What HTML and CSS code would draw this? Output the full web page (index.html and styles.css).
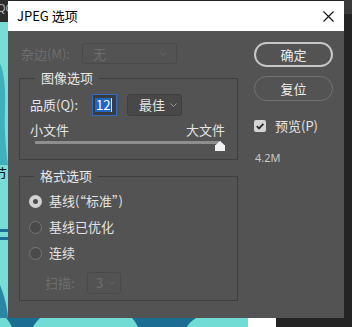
FILE: index.html
```html
<!DOCTYPE html>
<html lang="zh-CN">
<head>
<meta charset="utf-8">
<title>JPEG 选项</title>
<link rel="stylesheet" href="styles.css">
</head>
<body>
<svg class="backdrop" width="352" height="327" viewBox="0 0 352 327" aria-hidden="true">
  <rect width="352" height="327" fill="#242424"/>
  <rect x="0" y="0" width="8" height="22" fill="#2d2d2d"/>
  <text x="-3" y="12" fill="#b8b8b8" font-size="11" font-family="Noto Sans">QC</text>
  <rect x="0" y="22" width="8" height="305" fill="#78ddd6"/>
  <path d="M0 64 C4 70 6 90 5 110 C4 130 6 150 8 165 L0 165 Z" fill="#3fb0bc"/>
  <text x="-7" y="179" fill="#141414" font-size="14" font-family="Noto Sans CJK SC">节</text>
  <rect x="0" y="229" width="8" height="3" fill="#1e6f96"/>
  <rect x="0" y="237" width="8" height="3" fill="#1e6f96"/>
  <path d="M0 285 C4 295 7 305 8 318 L0 318 Z" fill="#2b86a6"/>
  <rect x="0" y="318" width="248" height="9" fill="#70dcd4"/>
  <path d="M6 318 L40 318 C36 322 34 325 33 327 L12 327 C10 323 8 320 6 318 Z" fill="#1b6d93"/>
  <path d="M132 318 L196 318 C190 322 188 325 187 327 L138 327 C136 323 134 320 132 318 Z" fill="#1b6d93"/>
  <rect x="248" y="318" width="28" height="9" fill="#ffffff"/>
  <rect x="344" y="0" width="8" height="14" fill="#3a3a3a"/>
</svg>

<div class="dialog">
  <div class="titlebar">
    <span class="title">JPEG 选项</span>
    <svg class="close" width="11" height="11" viewBox="0 0 11 11" aria-hidden="true">
      <path d="M0.5 0.5 L10.5 10.5 M10.5 0.5 L0.5 10.5" stroke="#111" stroke-width="1.1" fill="none"/>
    </svg>
  </div>

  <div class="content">
    <div class="main">
      <div class="row matte">
        <span class="label disabled">杂边(M):</span>
        <div class="select disabled wide">
          <span>无</span>
          <svg class="chev" width="7" height="4" viewBox="0 0 7 4"><path d="M0.5 0.5 L3.5 3.5 L6.5 0.5" fill="none" stroke="currentColor" stroke-width="1"/></svg>
        </div>
      </div>

      <fieldset class="group image">
        <legend>图像选项</legend>
        <div class="row quality">
          <span class="label">品质(Q):</span>
          <div class="num"><span class="sel">12</span><span class="caret"></span></div>
          <div class="select best">
            <span>最佳</span>
            <svg class="chev" width="7" height="4" viewBox="0 0 7 4"><path d="M0.5 0.5 L3.5 3.5 L6.5 0.5" fill="none" stroke="currentColor" stroke-width="1"/></svg>
          </div>
        </div>
        <div class="sizes"><span>小文件</span><span>大文件</span></div>
        <div class="slider">
          <div class="track"></div>
          <svg class="thumb" width="10" height="10" viewBox="0 0 10 10" aria-hidden="true">
            <path d="M5 0 L10 4.5 L10 10 L0 10 L0 4.5 Z" fill="#f2f2f2"/>
          </svg>
        </div>
      </fieldset>

      <fieldset class="group format">
        <legend>格式选项</legend>
        <div class="radio on"><span class="dot"></span><span>基线(“标准”)</span></div>
        <div class="radio"><span class="dot"></span><span>基线已优化</span></div>
        <div class="radio"><span class="dot"></span><span>连续</span></div>
        <div class="row scans">
          <span class="label disabled">扫描:</span>
          <div class="select disabled small">
            <span>3</span>
            <svg class="chev" width="7" height="4" viewBox="0 0 7 4"><path d="M0.5 0.5 L3.5 3.5 L6.5 0.5" fill="none" stroke="currentColor" stroke-width="1"/></svg>
          </div>
        </div>
      </fieldset>
    </div>

    <div class="side">
      <div class="btn primary">确定</div>
      <div class="btn">复位</div>
      <div class="check">
        <span class="box">
          <svg width="12" height="12" viewBox="0 0 12 12" aria-hidden="true"><path d="M2.8 6.2 L5 8.4 L9.4 3.8" fill="none" stroke="#2b2b2b" stroke-width="1.8"/></svg>
        </span>
        <span>预览(P)</span>
      </div>
      <div class="filesize">4.2M</div>
    </div>
  </div>
</div>
</body>
</html>
```

FILE: styles.css
```css
* { box-sizing: border-box; }
html, body { margin: 0; padding: 0; }
body {
  width: 352px;
  height: 327px;
  overflow: hidden;
  position: relative;
  background: #242424;
  font-family: "Noto Sans CJK SC", "Noto Sans", sans-serif;
  font-size: 13px;
  color: #e4e4e4;
}
.backdrop { position: absolute; left: 0; top: 0; }

.dialog {
  position: relative;
  margin: 1px 0 0 8px;
  width: 336px;
  height: 317px;
  background: #535353;
  display: flex;
  flex-direction: column;
}
.titlebar {
  height: 30px;
  flex: none;
  background: #ffffff;
  color: #000;
  display: flex;
  align-items: center;
  justify-content: space-between;
  padding: 0 10px 0 9px;
  font-size: 13px;
}
.title { line-height: 16px; }
.close { display: block; }

.content {
  display: flex;
  gap: 16px;
  padding: 0 11px;
}
.main { width: 219px; flex: none; }
.side {
  width: 79px;
  flex: none;
  padding-top: 11px;
  display: flex;
  flex-direction: column;
}

.row { display: flex; align-items: center; }
.label { line-height: 16px; white-space: nowrap; }
.disabled { color: #6e6e6e; }

.matte { margin-top: 12px; height: 21px; padding-left: 2px; }
.matte .label { width: 61px; }

.select {
  display: flex;
  align-items: center;
  justify-content: space-between;
  border: 1px solid #3f3f3f;
  border-radius: 3px;
  background: #484848;
  color: #e4e4e4;
  line-height: 16px;
}
.select.disabled { background: #535353; border-color: #494949; color: #6e6e6e; }
.chev { display: block; color: #9a9a9a; }
.select.disabled .chev { color: #666; }
.wide { width: 95px; height: 21px; padding: 0 9px 0 10px; }
.best { width: 55px; height: 22px; margin-left: 10px; padding: 0 4px 0 11px; }
.small { width: 34px; height: 22px; padding: 0 5px 0 8px; }

.group {
  margin: 5px 0 0;
  padding: 0 12px 8px 10px;
  border: 1px solid #3e3e3e;
  min-width: 0;
}
.group legend {
  margin-left: 5px;
  padding: 0 6px;
  line-height: 18px;
  color: #e8e8e8;
}

.quality { margin-top: 7px; height: 22px; }
.quality .label { width: 62px; }
.num {
  width: 25px;
  height: 22px;
  border: 1px solid #2f6ec4;
  background: #3b3b3b;
  display: flex;
  align-items: center;
  padding-left: 2px;
}
.sel {
  background: #1f66cc;
  color: #fff;
  line-height: 14px;
  padding: 0 1px;
}
.caret { width: 1px; height: 14px; background: #e6e6e6; }

.sizes {
  margin-top: 6px;
  height: 16px;
  line-height: 16px;
  display: flex;
  justify-content: space-between;
}
.slider { position: relative; height: 10px; }
.track {
  margin: 3px 4px 0 5px;
  height: 3px;
  background: #8e8e8e;
}
.thumb { position: absolute; right: 0; top: 0; display: block; }

.format { margin-top: 7px; padding-left: 9px; padding-bottom: 6px; }
.radio {
  display: flex;
  align-items: center;
  height: 26px;
  line-height: 16px;
}
.radio:first-of-type { margin-top: 3px; }
.dot {
  width: 13px;
  height: 13px;
  border-radius: 50%;
  border: 1px solid #767676;
  background: #4a4a4a;
  margin-right: 7px;
  flex: none;
}
.radio.on .dot {
  border: 4px solid #d2d2d2;
  background: #4c4c4c;
}
.scans { margin-top: 6px; height: 22px; padding-left: 16px; }
.scans .label { width: 42px; }

.btn {
  height: 25px;
  border-radius: 13px;
  border: 1.5px solid #727272;
  display: flex;
  align-items: center;
  justify-content: center;
  line-height: 16px;
  color: #ececec;
}
.btn.primary { border: 2px solid #c6c6c6; }
.btn + .btn { margin-top: 9px; }

.check {
  margin-top: 17px;
  height: 16px;
  display: flex;
  align-items: center;
  line-height: 16px;
}
.box {
  width: 12px;
  height: 12px;
  border-radius: 2px;
  background: #d4d4d4;
  margin-right: 9px;
  flex: none;
}
.box svg { display: block; }

.filesize {
  margin-top: 17px;
  padding-left: 1px;
  font-family: "Noto Sans", sans-serif;
  font-size: 11px;
  line-height: 14px;
  color: #c8c8c8;
}
```
